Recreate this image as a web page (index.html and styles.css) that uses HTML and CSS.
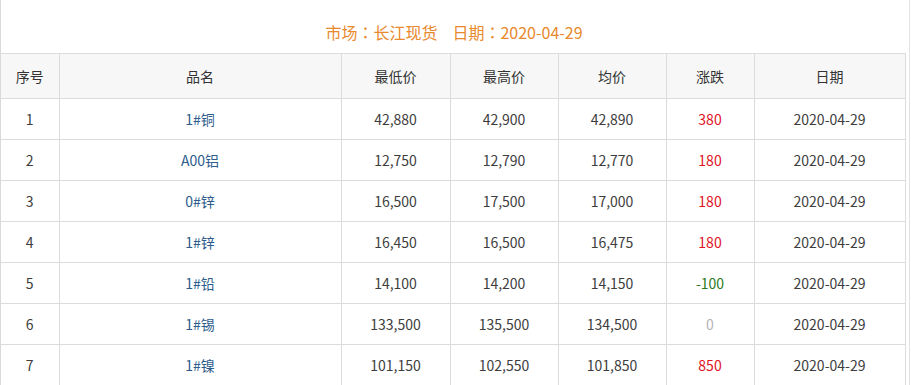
FILE: index.html
```html
<!DOCTYPE html>
<html lang="zh">
<head>
<meta charset="utf-8">
<link rel="stylesheet" href="styles.css">
</head>
<body>
<div class="wrap">
  <div class="title">市场<span class="colon">：</span>长江现货<span class="gap"></span>日期<span class="colon">：</span>2020-04-29</div>
  <table class="grid">
    <colgroup>
      <col class="c1"><col class="c2"><col class="c3"><col class="c4"><col class="c5"><col class="c6"><col class="c7">
    </colgroup>
    <thead>
      <tr><th>序号</th><th>品名</th><th>最低价</th><th>最高价</th><th>均价</th><th>涨跌</th><th>日期</th></tr>
    </thead>
    <tbody>
      <tr><td>1</td><td class="name">1#铜</td><td>42,880</td><td>42,900</td><td>42,890</td><td class="up">380</td><td>2020-04-29</td></tr>
      <tr><td>2</td><td class="name">A00铝</td><td>12,750</td><td>12,790</td><td>12,770</td><td class="up">180</td><td>2020-04-29</td></tr>
      <tr><td>3</td><td class="name">0#锌</td><td>16,500</td><td>17,500</td><td>17,000</td><td class="up">180</td><td>2020-04-29</td></tr>
      <tr><td>4</td><td class="name">1#锌</td><td>16,450</td><td>16,500</td><td>16,475</td><td class="up">180</td><td>2020-04-29</td></tr>
      <tr><td>5</td><td class="name">1#铅</td><td>14,100</td><td>14,200</td><td>14,150</td><td class="down">-100</td><td>2020-04-29</td></tr>
      <tr><td>6</td><td class="name">1#锡</td><td>133,500</td><td>135,500</td><td>134,500</td><td class="flat">0</td><td>2020-04-29</td></tr>
      <tr><td>7</td><td class="name">1#镍</td><td>101,150</td><td>102,550</td><td>101,850</td><td class="up">850</td><td>2020-04-29</td></tr>
    </tbody>
  </table>
</div>
</body>
</html>
```
FILE: styles.css
```css
html, body {
  margin: 0;
  padding: 0;
  background: #fff;
}
body {
  font-family: "Noto Sans CJK SC", "Microsoft YaHei", sans-serif;
  color: #444;
  overflow: hidden;
}
.wrap {
  width: 906px;
  height: 385px;
  border-left: 1px solid #d9d9d9;
  border-right: 1px solid #e3e3e3;
  padding-right: 2px;
}
.title {
  height: 53px;
  box-sizing: border-box;
  padding-top: 20px;
  text-align: center;
  font-size: 16px;
  line-height: 24px;
  color: #e8892d;
}
.colon {
  display: inline-block;
  width: 16px;
  text-align: center;
  font-family: "Noto Sans CJK TC", "Noto Sans CJK SC", sans-serif;
}
.gap {
  display: inline-block;
  width: 15px;
}
.grid {
  width: 904px;
  border-collapse: collapse;
  table-layout: fixed;
  font-size: 14px;
}
.c1 { width: 58px; }
.c2 { width: 282px; }
.c3 { width: 109px; }
.c4 { width: 108px; }
.c5 { width: 108px; }
.c6 { width: 88px; }
.c7 { width: 151px; }
.grid th, .grid td {
  border: 1px solid #dcdcdc;
  text-align: center;
  padding: 0;
  font-weight: normal;
}
.grid tr > :first-child { border-left: none; }
.grid th {
  height: 44px;
  background: #f7f7f7;
  color: #333;
}
.grid td {
  height: 40px;
  color: #3d3d3d;
}
.grid td.name { color: #2d5c8c; }
.grid td.up { color: #e0121f; }
.grid td.down { color: #2b7a21; }
.grid td.flat { color: #b3b3b3; }
```
